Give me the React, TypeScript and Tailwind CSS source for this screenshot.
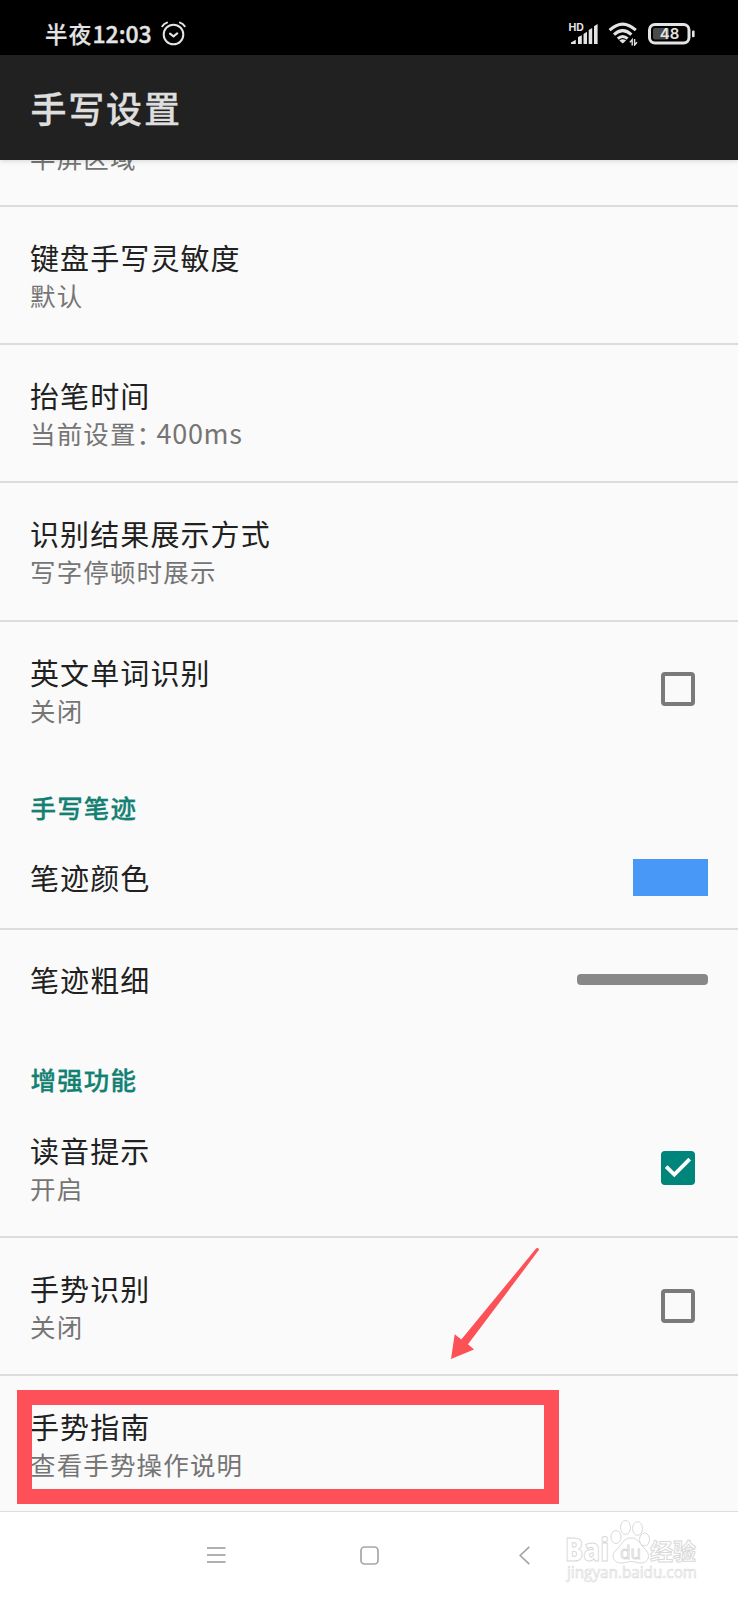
import type { ReactNode } from "react";

type RowProps = {
  title: string;
  summary?: ReactNode;
  last?: boolean;
  children?: ReactNode;
};

const Row = ({ title, summary, last, children }: RowProps) => {
  return (
    <div
      className={
        "flex box-content items-center justify-between pl-[30px] " +
        (summary ? "h-[136.2px] " : "h-[100px] ") +
        (last ? "" : "border-b-2 border-[#dcdcdc]")
      }
    >
      <div className={summary ? "" : "pb-[2px]"}>
        <div className="text-[29px] leading-[40px] tracking-[1.1px] text-[#212121]">{title}</div>
        {summary && (
          <div className="text-[25.5px] leading-[36px] tracking-[1.15px] text-[#757575]">{summary}</div>
        )}
      </div>
      {children}
    </div>
  );
};

const Section = ({ title }: { title: string }) => {
  return (
    <div className="flex h-[70px] items-end pb-[2.5px] pl-[30.5px] text-[25.5px] font-medium leading-[36px] tracking-[1.15px] text-[#128072] [-webkit-text-stroke:0.3px]">
      {title}
    </div>
  );
};

const Checkbox = ({ checked }: { checked?: boolean }) => {
  if (!checked) {
    return <div className="mb-px mr-[43px] h-[34px] w-[34px] rounded-[4px] border-4 border-[#7a7a7a]" />;
  }
  return (
    <div className="mr-[43px] h-[34px] w-[34px] rounded-[4px] bg-[#00857a]">
      <svg viewBox="0 0 34 34" className="h-full w-full" fill="none" stroke="#fff" strokeWidth="3.8">
        <path d="M5.2 15.6 L13.3 23.6 L28.7 8.2" />
      </svg>
    </div>
  );
};

const StatusBar = () => {
  return (
    <div className="flex h-[55px] items-center justify-between bg-black pl-[45px] pr-[43px] pt-3 text-[#e4e4e4]">
      <div className="flex items-center">
        <span className="pb-px text-[22.5px] font-medium leading-[30px] tracking-[1.2px] [-webkit-text-stroke:0.2px]">半夜</span>
        <span className="w-[60px] pb-px text-[23px] font-medium leading-[30px] [-webkit-text-stroke:0.4px]">
          12:03
        </span>
        <svg className="ml-[9px] h-[25px] w-[25px]" viewBox="0 0 25 25" fill="none" stroke="#e4e4e4" strokeWidth="2" strokeLinecap="round">
          <circle cx="12.5" cy="13.5" r="9.8" />
          <path d="M1.3 5.2 Q3 2.6 6 1.6 M23.7 5.2 Q22 2.6 19 1.6 M9 12.6 L12.5 15.4 L16.2 12.4" />
        </svg>
      </div>
      <div className="flex items-center">
        <svg className="h-[23px] w-[29px] overflow-visible" viewBox="-1 -1 29 23" fill="#e4e4e4">
          <text x="-1.5" y="7.6" fontSize="10.5" fontWeight="700" fontFamily="Inter, sans-serif">HD</text>
          <path d="M1 21 V19.5 L5.8 16.8 V21Z M8 21 V14 L11.8 12.2 V21Z M13.5 21 V11 L17 8.8 V21Z M18.7 21 V7 L22.2 5 V21Z M24 21 V3.2 L27.6 1 V21Z" />
        </svg>
        <svg className="ml-[10px] h-[24px] w-[30px]" viewBox="0 0 30 24" fill="none" stroke="#e4e4e4" strokeWidth="3">
          <path d="M1.6 8.2 Q14.7 -4 27.8 8.2 M6 12.6 Q14.7 4.6 23.4 12.6 M9.8 16.6 Q14.7 12.4 19.6 16.6" />
          <path d="M14.7 21.6 L11.3 18.6 Q14.7 15.8 18.1 18.6Z" fill="#e4e4e4" stroke="none" />
          <path d="M24.2 23.5 V17.6 L21.8 20.4 M26.6 17 V23 L29 20.2" strokeWidth="1.4" />
        </svg>
        <svg className="ml-[10px] h-[22px] w-[47px]" viewBox="0 0 47 22">
          <rect x="1.5" y="1.5" width="39.5" height="18.6" rx="5.5" fill="none" stroke="#e4e4e4" strokeWidth="3" />
          <rect x="5" y="5" width="16" height="11.6" rx="2" fill="#4a4a4a" />
          <rect x="44" y="7.6" width="2.6" height="6.6" rx="1" fill="#e4e4e4" />
          <text x="21.5" y="16.2" fontSize="15" fontWeight="600" textAnchor="middle" fill="#e4e4e4" fontFamily="Inter, sans-serif">48</text>
        </svg>
      </div>
    </div>
  );
};

const Watermark = () => {
  return (
    <svg
      className="absolute left-[560px] top-0 h-[76px] w-[145px]"
      viewBox="0 0 145 76"
      fill="#fff"
      stroke="#d9d9d9"
      strokeWidth="1"
    >
      <text x="5" y="48.5" fontSize="31" fontWeight="800" textLength="44" lengthAdjust="spacingAndGlyphs" fontFamily="Open Sans, sans-serif">Bai</text>
      <ellipse cx="56" cy="25" rx="5" ry="6.5" />
      <ellipse cx="65.5" cy="15.5" rx="5" ry="7" />
      <ellipse cx="77.5" cy="16.5" rx="5" ry="6.8" />
      <ellipse cx="84.5" cy="27.5" rx="5" ry="6.5" />
      <path d="M71 26 C63 26 62 33 56 38 C50 44 54 51 61 51 C66 51 68 49.5 71 49.5 C75 49.5 77 51 81 51 C88 51 91 44 86 38 C80 33 79 26 71 26Z" />
      <text x="60" y="46.5" fontSize="19" textLength="21" lengthAdjust="spacingAndGlyphs" fontFamily="Open Sans, sans-serif">du</text>
      <text x="90" y="48" fontSize="23" fontWeight="700" textLength="46" fontFamily="Noto Sans CJK SC, sans-serif">经验</text>
      <text x="7" y="66" fontSize="15.5" textLength="130" lengthAdjust="spacingAndGlyphs" strokeWidth="0.6" fontFamily="Open Sans, sans-serif">jingyan.baidu.com</text>
    </svg>
  );
};

const NavBar = () => {
  return (
    <div className="relative flex h-[89px] items-center border-t border-[#dedede] bg-white pb-[2px] pl-[207px]">
      <svg className="h-[18px] w-[19px]" viewBox="0 0 19 18" stroke="#b0b0b0" strokeWidth="1.9">
        <path d="M0 2 H18.5 M0 9 H18.5 M0 16 H18.5" />
      </svg>
      <svg className="ml-[134px] h-[19px] w-[19px]" viewBox="0 0 19 19" fill="none" stroke="#a6a6a6" strokeWidth="1.7">
        <rect x="1" y="1" width="17" height="17" rx="3.5" />
      </svg>
      <svg className="ml-[140px] h-[19px] w-[12px]" viewBox="0 0 12 19" fill="none" stroke="#a6a6a6" strokeWidth="1.7">
        <path d="M10.3 0.8 L1.2 9.5 L10.3 18.2" />
      </svg>
      <Watermark />
    </div>
  );
};

// Red arrow and frame drawn over the list
const Highlight = () => {
  return (
    <>
      <svg className="absolute left-[450px] top-[1246px] h-[114px] w-[91px]" viewBox="450 1246 91 114" fill="#fd5158">
        <path d="M451 1359 L454.7 1334.3 L461.3 1339.5 L536.3 1248.3 Q538.8 1247 539 1249.8 L468 1344.3 L474 1349.6Z" />
      </svg>
      <div className="absolute left-[17px] top-[1390px] h-[114px] w-[542px] border-[15px] border-[#fe5058]" />
    </>
  );
};

export default function App() {
  return (
    <div className="relative flex h-[1600px] w-[738px] flex-col overflow-hidden bg-[#fafafa] font-['Noto_Sans_CJK_SC',sans-serif]">
      <StatusBar />
      <div className="z-10 flex h-[105px] shrink-0 items-center bg-[#212121] pb-px pl-[30.5px] text-[36px] font-medium leading-[50px] tracking-[1.8px] text-[#dedede] shadow-[0_1px_5px_rgba(0,0,0,0.15)] [-webkit-text-stroke:0.3px]">
        手写设置
      </div>
      <div className="flex-1 overflow-hidden">
        <div className="flex h-[47px] items-end overflow-hidden border-b-2 border-[#dcdcdc] pb-[30px] pl-[30px] text-[25.5px] leading-[36px] tracking-[1.15px] text-[#757575]">
          半屏区域
        </div>
        <Row title="键盘手写灵敏度" summary="默认" />
        <Row
          title="抬笔时间"
          summary={
            <>
              当前设置<span className="mr-[6px] [font-feature-settings:'halt']">：</span>
              <span className="text-[27px] leading-none tracking-[0.7px]">400ms</span>
            </>
          }
        />
        <Row title="识别结果展示方式" summary="写字停顿时展示" />
        <Row title="英文单词识别" summary="关闭" last>
          <Checkbox />
        </Row>
        <Section title="手写笔迹" />
        <Row title="笔迹颜色">
          <div className="mr-[30px] h-[37px] w-[75px] bg-[#4898f8]" />
        </Row>
        <Row title="笔迹粗细" last>
          <div className="mr-[30px] h-[11px] w-[131px] rounded-[4px] bg-[#888]" />
        </Row>
        <Section title="增强功能" />
        <Row title="读音提示" summary="开启">
          <Checkbox checked />
        </Row>
        <Row title="手势识别" summary="关闭">
          <Checkbox />
        </Row>
        <Row title="手势指南" summary="查看手势操作说明" last />
      </div>
      <NavBar />
      <Highlight />
    </div>
  );
}
